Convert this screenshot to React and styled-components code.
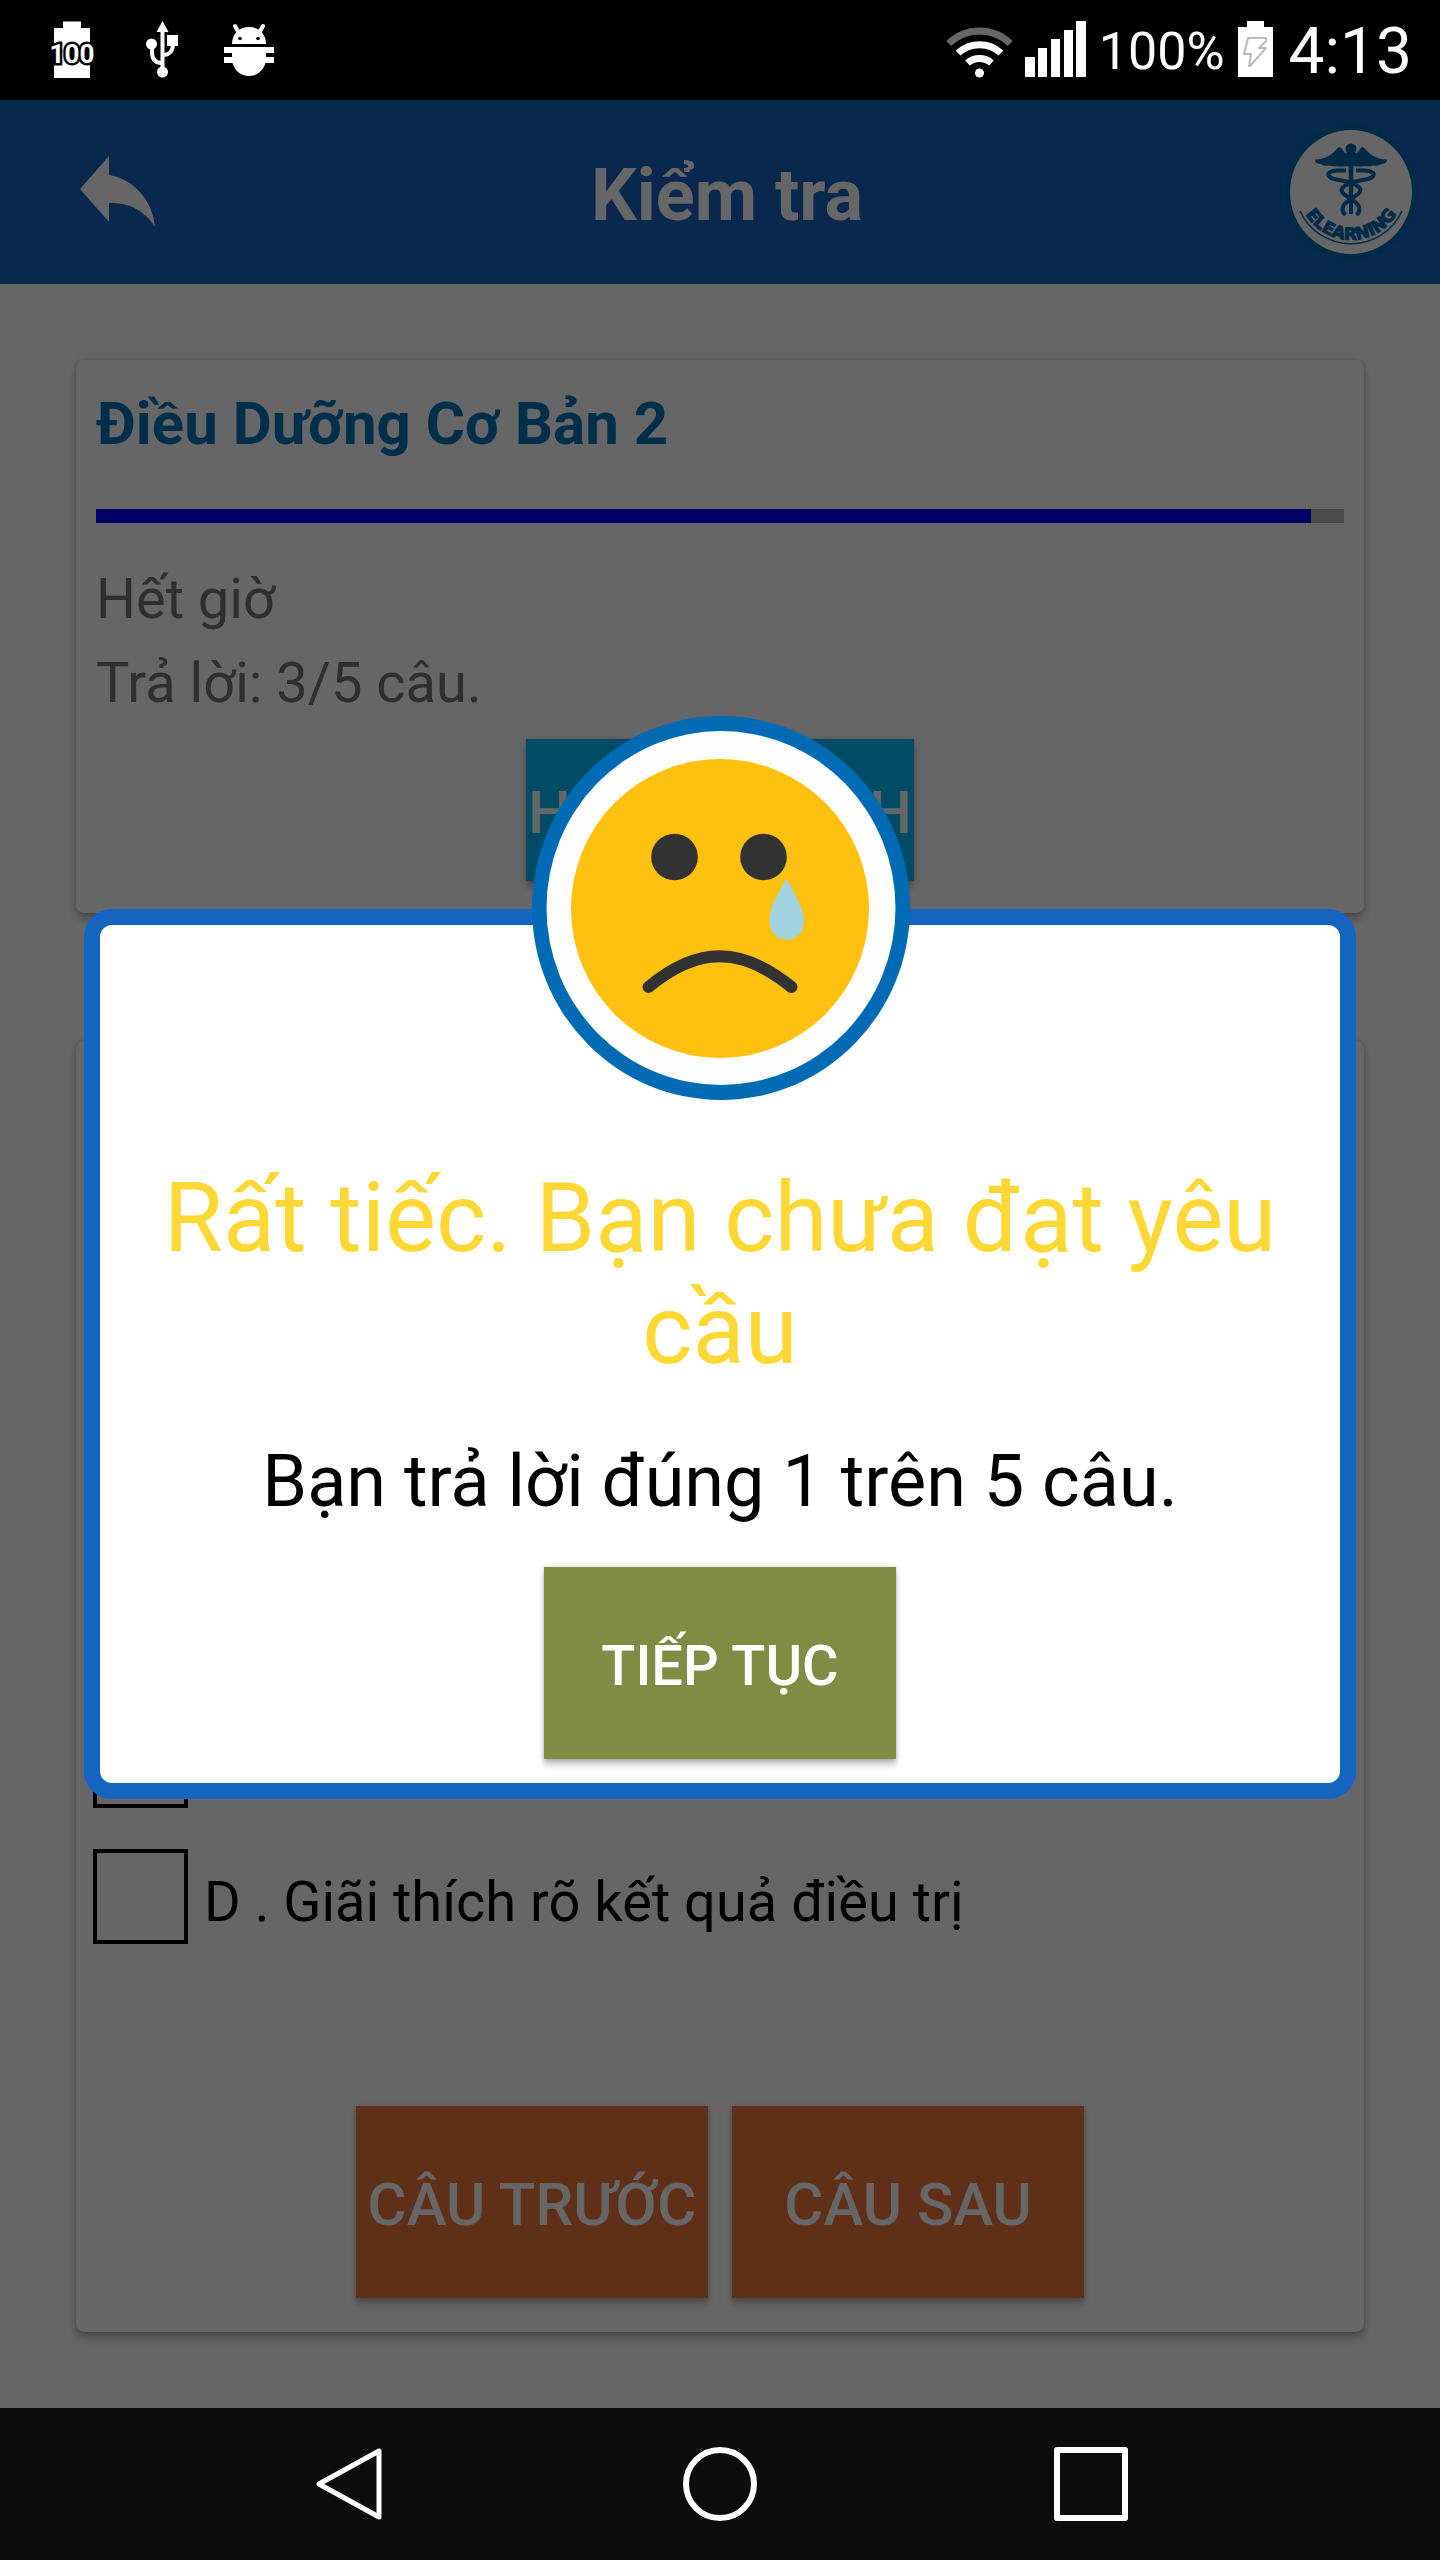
import React from "react";
import styled, { createGlobalStyle } from "styled-components";

const GlobalStyle = createGlobalStyle`
  *, *::before, *::after { box-sizing: border-box; }
  body {
    margin: 0;
    background: #000;
    font-family: Roboto, "Noto Sans", sans-serif;
  }
  h1, h2, p { margin: 0; }
  svg { display: block; flex: none; }
`;

const Screen = styled.div`
  display: flex;
  flex-direction: column;
  min-height: 100vh;
`;

/* ---------- system status bar ---------- */

const StatusBar = styled.div`
  display: flex;
  align-items: center;
  justify-content: space-between;
  height: 100px;
  padding: 0 28px 0 44px;
  background: #000;
  color: #fff;
`;

const StatusGroup = styled.div`
  display: flex;
  align-items: center;
  gap: ${(p) => p.$gap}px;
`;

const BatteryLevel = styled.span`
  font-size: 52px;
  line-height: 64px;
  padding-top: 4px;
`;

const Clock = styled.time`
  margin-left: 4px;
  font-size: 64px;
  line-height: 64px;
  padding-top: 4px;
`;

/* ---------- app ---------- */

const AppArea = styled.div`
  position: relative;
  display: flex;
  flex: 1;
  flex-direction: column;
  background: #fff;
`;

const Header = styled.header`
  display: flex;
  align-items: center;
  height: 184px;
  background: #1565c0;
  color: #fff;
`;

const BackButton = styled.button`
  display: flex;
  align-items: center;
  width: 170px;
  height: 100%;
  padding: 0 0 0 80px;
  border: 0;
  background: none;
  color: inherit;
`;

const HeaderTitle = styled.h1`
  flex: 1;
  padding-top: 8px;
  font-size: 72px;
  font-weight: 700;
  line-height: 84px;
  text-align: center;
`;

const LogoSlot = styled.div`
  width: 156px;
`;

const Main = styled.main`
  display: flex;
  flex: 1;
  flex-direction: column;
  gap: 128px;
  padding: 76px;
`;

const Card = styled.section`
  display: flex;
  flex-direction: column;
  border-radius: 8px;
  background: #fff;
  box-shadow: 0 0 4px rgba(0, 0, 0, 0.2), 0 6px 8px rgba(0, 0, 0, 0.26);
`;

const SummaryCard = styled(Card)`
  padding: 28px 20px 32px;
`;

const CourseTitle = styled.h2`
  color: #0277bd;
  font-size: 60px;
  font-weight: 700;
  line-height: 72px;
`;

const ProgressTrack = styled.div`
  height: 14px;
  margin: 49px 0 34px;
  background: #bbb;
`;

const ProgressFill = styled.div`
  height: 100%;
  background: #00f;
`;

const InfoLine = styled.p`
  color: #757575;
  font-size: 56px;
  line-height: 84px;
`;

const QuestionCard = styled(Card)`
  flex: 1;
  justify-content: flex-end;
  padding: 34px 17px;
`;

const Answers = styled.div`
  display: flex;
  flex-direction: column;
  gap: 41px;
  margin-bottom: 162px;
`;

const Answer = styled.label`
  display: flex;
  align-items: flex-end;
  gap: 16px;
  min-height: 95px;
  color: #000;
  font-size: 56px;
  line-height: 84px;
`;

const Tick = styled.input`
  flex: none;
  width: 95px;
  height: 95px;
  margin: 0;
  appearance: none;
  border: 4px solid #000;
  background: transparent;
`;

const ButtonRow = styled.div`
  display: flex;
  justify-content: center;
  gap: 24px;
  margin-top: ${(p) => p.$top || 0}px;
`;

const Button = styled.button`
  min-width: 352px;
  height: ${(p) => p.$height || 192}px;
  padding: 6px 2px 0;
  border: 0;
  background: ${(p) => p.$color};
  color: #fff;
  font-family: inherit;
  font-size: ${(p) => p.$size || 60}px;
  font-weight: 500;
  line-height: 72px;
  text-align: center;
  white-space: nowrap;
  box-shadow: 0 0 4px rgba(0, 0, 0, 0.2), 0 6px 6px rgba(0, 0, 0, 0.24);
`;

/* ---------- result dialog ---------- */

const Scrim = styled.div`
  position: absolute;
  inset: 0;
  display: flex;
  flex-direction: column;
  align-items: stretch;
  justify-content: center;
  padding: 6px 84px 0;
  background: rgba(0, 0, 0, 0.6);
`;

const FaceSlot = styled.div`
  z-index: 1;
  align-self: center;
  margin-bottom: -191px;
`;

const Dialog = styled.div`
  display: flex;
  flex-direction: column;
  align-items: center;
  padding: 237px 24px 24px;
  border: 16px solid #1565c0;
  border-radius: 28px;
  background: #fff;
  text-align: center;
`;

const DialogTitle = styled.h2`
  color: #fdd835;
  font-size: 96px;
  font-weight: 400;
  line-height: 112px;
`;

const DialogText = styled.p`
  margin: 54px 0 43px;
  color: #000;
  font-size: 72px;
  line-height: 84px;
`;

/* ---------- system navigation ---------- */

const NavBar = styled.nav`
  display: flex;
  height: 152px;
  padding: 0 164px;
  background: #0d0d0d;
`;

const NavButton = styled.button`
  display: flex;
  flex: 1;
  align-items: center;
  justify-content: center;
  padding: 0;
  border: 0;
  background: none;
`;

const BLUE = "#006bb3";

const BatteryFullIcon = () => (
  <svg width="56" height="68" viewBox="44 16 56 68" aria-hidden="true">
    <path d="M63 21.500h18v6.500h9v50H54V28h9z" fill="#fff" />
    <text
      x="72"
      y="63"
      textAnchor="middle"
      fontFamily="Roboto, sans-serif"
      fontSize="26"
      fontWeight="700"
      fill="#fff"
      stroke="#000"
      strokeWidth="5"
      paintOrder="stroke"
    >
      100
    </text>
  </svg>
);

const UsbIcon = () => (
  <svg width="36" height="68" viewBox="142 16 36 68" aria-hidden="true">
    <g fill="#fff">
      <path d="M160.500 21l6 11h-12z" />
      <circle cx="149.500" cy="44" r="5.500" />
      <rect x="165" y="35" width="11" height="11" />
      <circle cx="160.500" cy="72" r="5.500" />
    </g>
    <g fill="none" stroke="#fff" strokeWidth="4">
      <path d="M160.500 30v42" />
      <path d="M150 44v8c0 8 4 11 10 11" />
      <path d="M171 44c0 7-4 11-10 11" />
    </g>
  </svg>
);

const BugIcon = () => (
  <svg width="50" height="68" viewBox="223 16 50 68" aria-hidden="true">
    <path d="M231 44C231 33 239 27 248 27S265 33 265 44z" fill="#fff" />
    <path d="M234 26l4 7M262 26l-4 7" stroke="#fff" strokeWidth="4" strokeLinecap="round" />
    <circle cx="239" cy="38.500" r="1.800" />
    <circle cx="257" cy="38.500" r="1.800" />
    <path
      d="M223 47h50v6h-8v4h8v6h-8.500C262 71 256 76 248 76S234 71 231.500 63H223v-6h8v-4h-8z"
      fill="#fff"
    />
  </svg>
);

const WifiIcon = () => (
  <svg width="68" height="68" viewBox="947 16 68 68" aria-hidden="true">
    <g fill="none" strokeWidth="7">
      <path d="M950.700 43.500A44 44 0 0 1 1012.300 43.500" stroke="#666" />
      <path d="M960 53A32 32 0 0 1 1003 53" stroke="#fff" />
      <path d="M969.500 63A18 18 0 0 1 993.500 63" stroke="#fff" />
    </g>
    <circle cx="981.500" cy="73" r="4.500" fill="#fff" />
  </svg>
);

const SignalIcon = () => (
  <svg width="62" height="68" viewBox="1026 16 62 68" aria-hidden="true">
    <path
      d="M1026 57h10v20h-10zM1039 48h9v29h-9zM1052 39h9v38h-9zM1065 30h9v47h-9zM1077 21h10v56h-10z"
      fill="#fff"
    />
  </svg>
);

const ChargingIcon = () => (
  <svg width="36" height="68" viewBox="1237 16 36 68" aria-hidden="true">
    <path d="M1247 21h17v6h9v50h-35V27h9z" fill="#fff" />
    <path
      d="M1248 38h18v3l-7 7h7l-16 18h-1l2-12h-7z"
      fill="none"
      stroke="#bbb"
      strokeWidth="2"
      strokeLinejoin="round"
    />
  </svg>
);

const BackArrow = () => (
  <svg width="76" height="72" viewBox="80 156 76 72" aria-hidden="true">
    <path d="M80 189l29-33v19c25 4 44 26 46 52-11-17-25-24-46-24v19z" fill="currentColor" />
  </svg>
);

const HalfCaduceus = () => (
  <>
    <path d="M0-39H-6L-9-43C-11-46-13-45-15-42C-21-36-26-33-36-32.500C-36-29-33-28-30-28C-27-25-24-27-22-26.500C-18-25-14-26-12-25.500C-8-25-4-26 0-26z" fill={BLUE} />
    <path
      d="M-5-21.500h-9C-26-21-26-14-12-12C-3-10.500 8-8 9.500-2C9.500 2 4 4 0 7C-7 11-12 17-5.500 23"
      fill="none"
      stroke={BLUE}
      strokeWidth="4"
    />
  </>
);

const Logo = () => (
  <svg width="134" height="136" viewBox="-67 -68 134 136" role="img" aria-label="Elearning">
    <ellipse rx="66" ry="67.500" fill={BLUE} />
    <ellipse rx="61" ry="62" fill="#fff" />
    <circle cy="-43" r="5.500" fill={BLUE} />
    <path d="M-2.500-40h5L2 22h-4z" fill={BLUE} />
    <HalfCaduceus />
    <g transform="scale(-1 1)">
      <HalfCaduceus />
    </g>
    <path id="logo-arc" d="M-49 15A53 53 0 0 0 49 15" fill="none" />
    <path d="M-51 19A56 56 0 0 0 51 19" fill="none" stroke={BLUE} strokeWidth="1.500" />
    <text
      fill={BLUE}
      stroke={BLUE}
      strokeWidth="1"
      fontFamily="'DejaVu Sans', sans-serif"
      fontSize="17"
      fontWeight="700"
      textAnchor="middle"
    >
      <textPath href="#logo-arc" startOffset="50%">ELEARNING</textPath>
    </text>
  </svg>
);

const SadFace = () => (
  <svg width="380" height="384" viewBox="-1 0 380 384" role="img" aria-label="Mặt buồn">
    <ellipse cx="190" cy="192" rx="189" ry="192" fill="#006bb5" />
    <ellipse cx="190" cy="192" rx="174.500" ry="177" fill="#fdfdfd" />
    <ellipse cx="189" cy="192.500" rx="149" ry="149.500" fill="#fec10f" />
    <circle cx="143.500" cy="141" r="23.300" fill="#323232" />
    <circle cx="232.500" cy="141" r="23.300" fill="#323232" />
    <path
      d="M117.500 271C167 230 210 230 260.500 271"
      fill="none"
      stroke="#323232"
      strokeWidth="12"
      strokeLinecap="round"
    />
    <path d="M255.500 163C263 176 273 193 273 205C273 217 265 223.500 256 223.500S238.500 217 238.500 205C238.500 190 248 175 255.500 163z" fill="#a0d2e0" />
  </svg>
);

const NavIcon = ({ children }) => (
  <svg width="76" height="76" viewBox="0 0 76 76" fill="none" stroke="#fff" strokeWidth="6" aria-hidden="true">
    {children}
  </svg>
);

const answers = [
  { id: "C", text: "" },
  { id: "D", text: "D . Giãi thích rõ kết quả điều trị" },
];

const elapsed = 97.36;

export default function App() {
  return (
    <Screen>
      <GlobalStyle />
      <StatusBar>
        <StatusGroup $gap={44}>
          <BatteryFullIcon />
          <UsbIcon />
          <BugIcon />
        </StatusGroup>
        <StatusGroup $gap={12}>
          <WifiIcon />
          <SignalIcon />
          <BatteryLevel>100%</BatteryLevel>
          <ChargingIcon />
          <Clock>4:13</Clock>
        </StatusGroup>
      </StatusBar>

      <AppArea>
        <Header>
          <BackButton aria-label="Quay lại">
            <BackArrow />
          </BackButton>
          <HeaderTitle>Kiểm tra</HeaderTitle>
          <LogoSlot>
            <Logo />
          </LogoSlot>
        </Header>

        <Main>
          <SummaryCard>
            <CourseTitle>Điều Dưỡng Cơ Bản 2</CourseTitle>
            <ProgressTrack role="progressbar" aria-valuenow={elapsed} aria-label="Thời gian">
              <ProgressFill style={{ width: `${elapsed}%` }} />
            </ProgressTrack>
            <InfoLine>Hết giờ</InfoLine>
            <InfoLine>Trả lời: 3/5 câu.</InfoLine>
            <ButtonRow $top={14}>
              <Button $color="#00bfff" $height={142}>HOÀN THÀNH</Button>
            </ButtonRow>
          </SummaryCard>

          <QuestionCard>
            <Answers>
              {answers.map((a) => (
                <Answer key={a.id}>
                  <Tick type="checkbox" name="answer" value={a.id} aria-label={a.text || a.id} />
                  {a.text}
                </Answer>
              ))}
            </Answers>
            <ButtonRow>
              <Button $color="#ed763a">CÂU TRƯỚC</Button>
              <Button $color="#ed763a">CÂU SAU</Button>
            </ButtonRow>
          </QuestionCard>
        </Main>

        <Scrim>
          <FaceSlot>
            <SadFace />
          </FaceSlot>
          <Dialog role="dialog" aria-modal="true" aria-labelledby="result-title">
            <DialogTitle id="result-title">Rất tiếc. Bạn chưa đạt yêu cầu</DialogTitle>
            <DialogText>Bạn trả lời đúng 1 trên 5 câu.</DialogText>
            <Button $color="#808b43" $size={56}>TIẾP TỤC</Button>
          </Dialog>
        </Scrim>
      </AppArea>

      <NavBar>
        <NavButton aria-label="Trở về">
          <NavIcon>
            <path d="M68 5v66L8 38z" strokeWidth="5" strokeLinejoin="round" />
          </NavIcon>
        </NavButton>
        <NavButton aria-label="Màn hình chính">
          <NavIcon>
            <circle cx="38" cy="38" r="34" />
          </NavIcon>
        </NavButton>
        <NavButton aria-label="Ứng dụng gần đây">
          <NavIcon>
            <rect x="4" y="4" width="68" height="68" strokeLinejoin="round" />
          </NavIcon>
        </NavButton>
      </NavBar>
    </Screen>
  );
}
